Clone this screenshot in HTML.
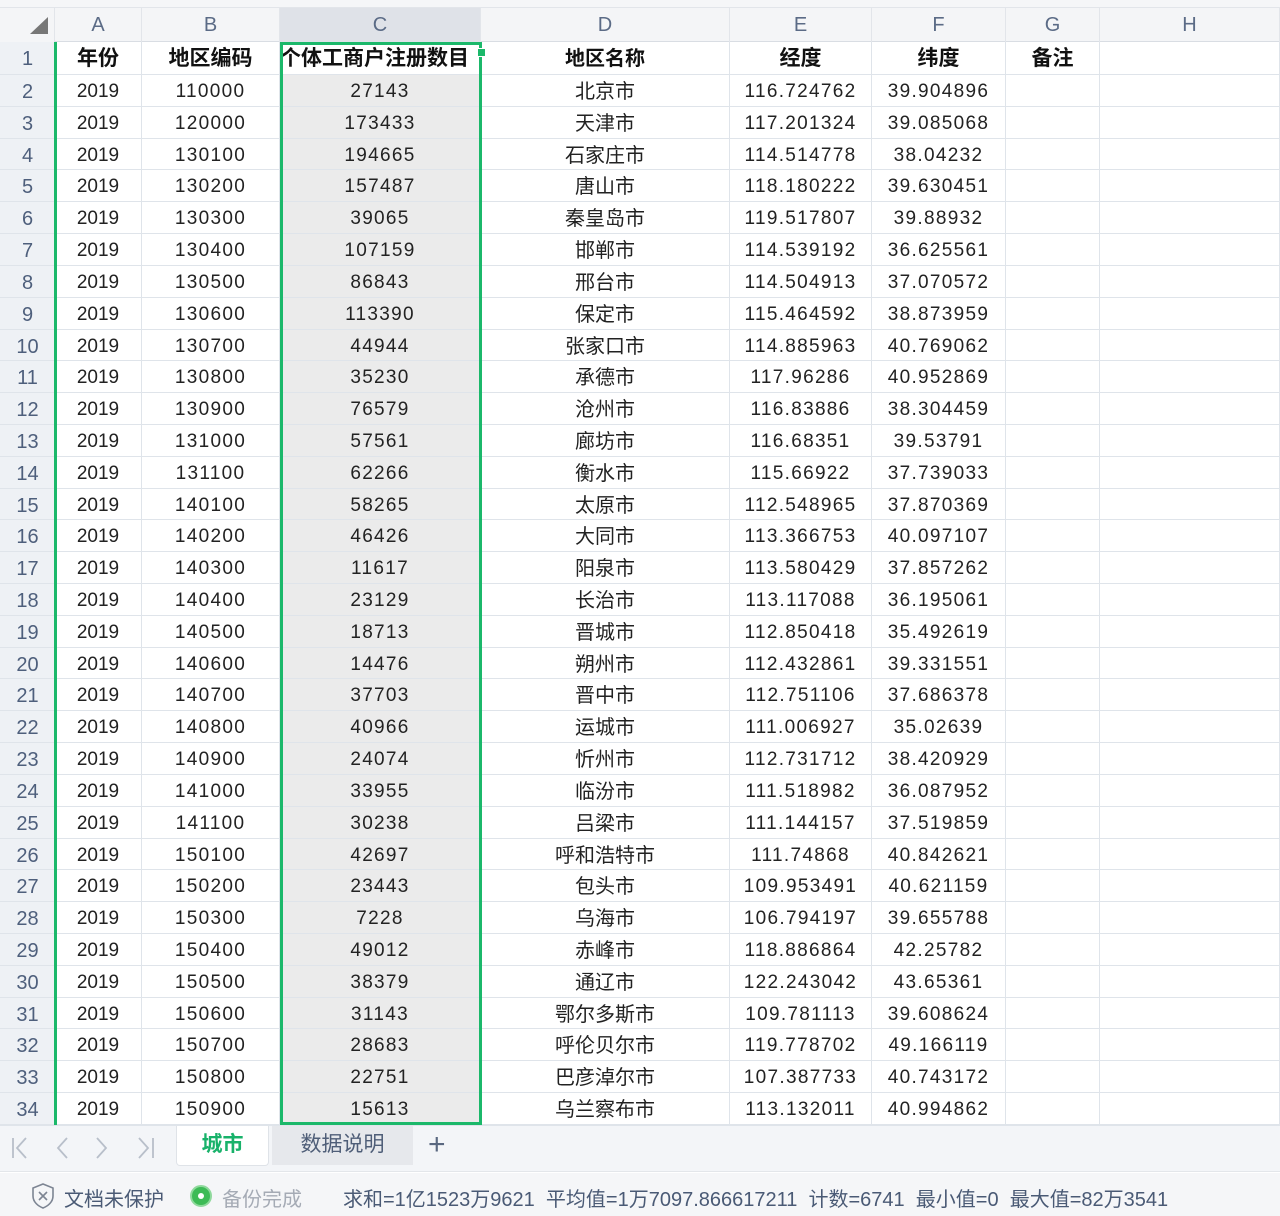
<!DOCTYPE html>
<html><head><meta charset="utf-8"><style>
*{margin:0;padding:0;box-sizing:border-box}
body{width:1280px;height:1216px;overflow:hidden;background:#fff;font-family:"Liberation Sans","Noto Sans CJK SC",sans-serif;position:relative}
.top{position:absolute;left:0;top:0;width:1280px;height:8px;background:#f5f6f8;border-bottom:1px solid #e2e5ea}
.hdr{position:absolute;left:0;top:8px;height:34px;width:1280px;background:#f4f5f7;border-bottom:1px solid #d9dde3;display:flex}
.hdr div{height:34px;line-height:34px;text-align:center;color:#5b6b86;font-size:20px;border-right:1px solid #e2e5ea}
.grid{position:absolute;left:0;top:42px;width:1280px}
.r{display:flex;height:31.8125px;border-bottom:1px solid #dfe4ea}
.r.h{height:33px}
.r div{border-right:1px solid #dfe4ea;text-align:center;font-size:19px;color:#222;line-height:34px;white-space:nowrap;overflow:hidden}
.r.h div{font-weight:bold;font-size:21px;line-height:34px;color:#111}
.r div:first-child{background:#eef1f5;color:#4e5f7c;font-weight:normal!important;font-size:20px;border-right:none}
.r div:nth-child(4){background:#ebebeb}
.r.h div:nth-child(4){background:#fff;text-align:left;overflow:hidden}
.w4{font-size:20px!important}
.n{letter-spacing:1.3px}
.w0{width:55px}.w1{width:87px}.w2{width:138px}.w3{width:201px}.w4{width:249px}.w5{width:142px}.w6{width:134px}.w7{width:94px}.w8{width:180px}
.sel{position:absolute;left:280px;top:42px;width:202px;height:1083px;border:3px solid #1bb86a}
.lg{position:absolute;left:54px;top:42px;width:3px;height:1083px;background:#1bb86a}
.fh{position:absolute;left:477px;top:48px;width:9px;height:9px;background:#1bb86a;border:1px solid #fff}
.tabs{position:absolute;left:0;top:1125px;width:1280px;height:47px;background:#f3f5f8;border-top:1px solid #dfe4ea;border-bottom:1px solid #e3e6ea}
.status{position:absolute;left:0;top:1173px;width:1280px;height:43px;background:#f5f6f8;color:#4a5a75;font-size:20px}
</style></head><body>
<div class="top"></div>
<div class="hdr">
<div class="w0" style="position:relative;background:#f4f5f7"><svg width="22" height="20" style="position:absolute;left:28px;top:7px"><polygon points="20,2 20,19 2,19" fill="#777"/></svg></div>
<div class="w1">A</div><div class="w2">B</div><div class="w3" style="background:#dfe2e8">C</div><div class="w4">D</div><div class="w5">E</div><div class="w6">F</div><div class="w7">G</div><div class="w8">H</div>
</div>
<div class="grid">
<div class="r h"><div class="w0">1</div><div class="w1">年份</div><div class="w2">地区编码</div><div class="w3">个体工商户注册数目</div><div class="w4">地区名称</div><div class="w5">经度</div><div class="w6">纬度</div><div class="w7">备注</div><div class="w8"></div></div>
<div class="r"><div class="w0">2</div><div class="w1">2019</div><div class="w2 n">110000</div><div class="w3 n">27143</div><div class="w4">北京市</div><div class="w5 n">116.724762</div><div class="w6 n">39.904896</div><div class="w7"></div><div class="w8"></div></div>
<div class="r"><div class="w0">3</div><div class="w1">2019</div><div class="w2 n">120000</div><div class="w3 n">173433</div><div class="w4">天津市</div><div class="w5 n">117.201324</div><div class="w6 n">39.085068</div><div class="w7"></div><div class="w8"></div></div>
<div class="r"><div class="w0">4</div><div class="w1">2019</div><div class="w2 n">130100</div><div class="w3 n">194665</div><div class="w4">石家庄市</div><div class="w5 n">114.514778</div><div class="w6 n">38.04232</div><div class="w7"></div><div class="w8"></div></div>
<div class="r"><div class="w0">5</div><div class="w1">2019</div><div class="w2 n">130200</div><div class="w3 n">157487</div><div class="w4">唐山市</div><div class="w5 n">118.180222</div><div class="w6 n">39.630451</div><div class="w7"></div><div class="w8"></div></div>
<div class="r"><div class="w0">6</div><div class="w1">2019</div><div class="w2 n">130300</div><div class="w3 n">39065</div><div class="w4">秦皇岛市</div><div class="w5 n">119.517807</div><div class="w6 n">39.88932</div><div class="w7"></div><div class="w8"></div></div>
<div class="r"><div class="w0">7</div><div class="w1">2019</div><div class="w2 n">130400</div><div class="w3 n">107159</div><div class="w4">邯郸市</div><div class="w5 n">114.539192</div><div class="w6 n">36.625561</div><div class="w7"></div><div class="w8"></div></div>
<div class="r"><div class="w0">8</div><div class="w1">2019</div><div class="w2 n">130500</div><div class="w3 n">86843</div><div class="w4">邢台市</div><div class="w5 n">114.504913</div><div class="w6 n">37.070572</div><div class="w7"></div><div class="w8"></div></div>
<div class="r"><div class="w0">9</div><div class="w1">2019</div><div class="w2 n">130600</div><div class="w3 n">113390</div><div class="w4">保定市</div><div class="w5 n">115.464592</div><div class="w6 n">38.873959</div><div class="w7"></div><div class="w8"></div></div>
<div class="r"><div class="w0">10</div><div class="w1">2019</div><div class="w2 n">130700</div><div class="w3 n">44944</div><div class="w4">张家口市</div><div class="w5 n">114.885963</div><div class="w6 n">40.769062</div><div class="w7"></div><div class="w8"></div></div>
<div class="r"><div class="w0">11</div><div class="w1">2019</div><div class="w2 n">130800</div><div class="w3 n">35230</div><div class="w4">承德市</div><div class="w5 n">117.96286</div><div class="w6 n">40.952869</div><div class="w7"></div><div class="w8"></div></div>
<div class="r"><div class="w0">12</div><div class="w1">2019</div><div class="w2 n">130900</div><div class="w3 n">76579</div><div class="w4">沧州市</div><div class="w5 n">116.83886</div><div class="w6 n">38.304459</div><div class="w7"></div><div class="w8"></div></div>
<div class="r"><div class="w0">13</div><div class="w1">2019</div><div class="w2 n">131000</div><div class="w3 n">57561</div><div class="w4">廊坊市</div><div class="w5 n">116.68351</div><div class="w6 n">39.53791</div><div class="w7"></div><div class="w8"></div></div>
<div class="r"><div class="w0">14</div><div class="w1">2019</div><div class="w2 n">131100</div><div class="w3 n">62266</div><div class="w4">衡水市</div><div class="w5 n">115.66922</div><div class="w6 n">37.739033</div><div class="w7"></div><div class="w8"></div></div>
<div class="r"><div class="w0">15</div><div class="w1">2019</div><div class="w2 n">140100</div><div class="w3 n">58265</div><div class="w4">太原市</div><div class="w5 n">112.548965</div><div class="w6 n">37.870369</div><div class="w7"></div><div class="w8"></div></div>
<div class="r"><div class="w0">16</div><div class="w1">2019</div><div class="w2 n">140200</div><div class="w3 n">46426</div><div class="w4">大同市</div><div class="w5 n">113.366753</div><div class="w6 n">40.097107</div><div class="w7"></div><div class="w8"></div></div>
<div class="r"><div class="w0">17</div><div class="w1">2019</div><div class="w2 n">140300</div><div class="w3 n">11617</div><div class="w4">阳泉市</div><div class="w5 n">113.580429</div><div class="w6 n">37.857262</div><div class="w7"></div><div class="w8"></div></div>
<div class="r"><div class="w0">18</div><div class="w1">2019</div><div class="w2 n">140400</div><div class="w3 n">23129</div><div class="w4">长治市</div><div class="w5 n">113.117088</div><div class="w6 n">36.195061</div><div class="w7"></div><div class="w8"></div></div>
<div class="r"><div class="w0">19</div><div class="w1">2019</div><div class="w2 n">140500</div><div class="w3 n">18713</div><div class="w4">晋城市</div><div class="w5 n">112.850418</div><div class="w6 n">35.492619</div><div class="w7"></div><div class="w8"></div></div>
<div class="r"><div class="w0">20</div><div class="w1">2019</div><div class="w2 n">140600</div><div class="w3 n">14476</div><div class="w4">朔州市</div><div class="w5 n">112.432861</div><div class="w6 n">39.331551</div><div class="w7"></div><div class="w8"></div></div>
<div class="r"><div class="w0">21</div><div class="w1">2019</div><div class="w2 n">140700</div><div class="w3 n">37703</div><div class="w4">晋中市</div><div class="w5 n">112.751106</div><div class="w6 n">37.686378</div><div class="w7"></div><div class="w8"></div></div>
<div class="r"><div class="w0">22</div><div class="w1">2019</div><div class="w2 n">140800</div><div class="w3 n">40966</div><div class="w4">运城市</div><div class="w5 n">111.006927</div><div class="w6 n">35.02639</div><div class="w7"></div><div class="w8"></div></div>
<div class="r"><div class="w0">23</div><div class="w1">2019</div><div class="w2 n">140900</div><div class="w3 n">24074</div><div class="w4">忻州市</div><div class="w5 n">112.731712</div><div class="w6 n">38.420929</div><div class="w7"></div><div class="w8"></div></div>
<div class="r"><div class="w0">24</div><div class="w1">2019</div><div class="w2 n">141000</div><div class="w3 n">33955</div><div class="w4">临汾市</div><div class="w5 n">111.518982</div><div class="w6 n">36.087952</div><div class="w7"></div><div class="w8"></div></div>
<div class="r"><div class="w0">25</div><div class="w1">2019</div><div class="w2 n">141100</div><div class="w3 n">30238</div><div class="w4">吕梁市</div><div class="w5 n">111.144157</div><div class="w6 n">37.519859</div><div class="w7"></div><div class="w8"></div></div>
<div class="r"><div class="w0">26</div><div class="w1">2019</div><div class="w2 n">150100</div><div class="w3 n">42697</div><div class="w4">呼和浩特市</div><div class="w5 n">111.74868</div><div class="w6 n">40.842621</div><div class="w7"></div><div class="w8"></div></div>
<div class="r"><div class="w0">27</div><div class="w1">2019</div><div class="w2 n">150200</div><div class="w3 n">23443</div><div class="w4">包头市</div><div class="w5 n">109.953491</div><div class="w6 n">40.621159</div><div class="w7"></div><div class="w8"></div></div>
<div class="r"><div class="w0">28</div><div class="w1">2019</div><div class="w2 n">150300</div><div class="w3 n">7228</div><div class="w4">乌海市</div><div class="w5 n">106.794197</div><div class="w6 n">39.655788</div><div class="w7"></div><div class="w8"></div></div>
<div class="r"><div class="w0">29</div><div class="w1">2019</div><div class="w2 n">150400</div><div class="w3 n">49012</div><div class="w4">赤峰市</div><div class="w5 n">118.886864</div><div class="w6 n">42.25782</div><div class="w7"></div><div class="w8"></div></div>
<div class="r"><div class="w0">30</div><div class="w1">2019</div><div class="w2 n">150500</div><div class="w3 n">38379</div><div class="w4">通辽市</div><div class="w5 n">122.243042</div><div class="w6 n">43.65361</div><div class="w7"></div><div class="w8"></div></div>
<div class="r"><div class="w0">31</div><div class="w1">2019</div><div class="w2 n">150600</div><div class="w3 n">31143</div><div class="w4">鄂尔多斯市</div><div class="w5 n">109.781113</div><div class="w6 n">39.608624</div><div class="w7"></div><div class="w8"></div></div>
<div class="r"><div class="w0">32</div><div class="w1">2019</div><div class="w2 n">150700</div><div class="w3 n">28683</div><div class="w4">呼伦贝尔市</div><div class="w5 n">119.778702</div><div class="w6 n">49.166119</div><div class="w7"></div><div class="w8"></div></div>
<div class="r"><div class="w0">33</div><div class="w1">2019</div><div class="w2 n">150800</div><div class="w3 n">22751</div><div class="w4">巴彦淖尔市</div><div class="w5 n">107.387733</div><div class="w6 n">40.743172</div><div class="w7"></div><div class="w8"></div></div>
<div class="r"><div class="w0">34</div><div class="w1">2019</div><div class="w2 n">150900</div><div class="w3 n">15613</div><div class="w4">乌兰察布市</div><div class="w5 n">113.132011</div><div class="w6 n">40.994862</div><div class="w7"></div><div class="w8"></div></div>
</div>
<div class="lg"></div>
<div class="sel"></div>
<div class="fh"></div>
<div class="tabs">
<svg width="160" height="40" style="position:absolute;left:0;top:2px" fill="none" stroke="#b8bfca" stroke-width="1.8">
<path d="M13 10v20M26 10l-9 10 9 10"/><path d="M67 10l-9 10 9 10"/><path d="M97 10l9 10-9 10"/><path d="M139 10l9 10-9 10M153 10v20"/></svg>
<div style="position:absolute;left:176px;top:0;width:93px;height:40px;background:#fff;border:1px solid #dfe3e8;border-top:none;border-radius:0 0 4px 4px;color:#18b26a;font-size:21px;font-weight:bold;text-align:center;line-height:38px">城市</div>
<div style="position:absolute;left:272px;top:0;width:141px;height:39px;background:#e6e8ec;color:#4f5e78;font-size:21px;text-align:center;line-height:38px">数据说明</div>
<div style="position:absolute;left:428px;top:0;font-size:30px;color:#5a6880;line-height:38px;font-weight:300">+</div>
</div>
<div class="status">
<svg width="26" height="28" style="position:absolute;left:31px;top:9px" fill="none" stroke="#7d8593" stroke-width="1.6"><path d="M12 2L22 6v8c0 6-5 10-10 12C7 24 2 20 2 14V6z"/><path d="M8 10l8 8M16 10l-8 8"/></svg>
<div style="position:absolute;left:64px;top:10px">文档未保护</div>
<div style="position:absolute;left:190px;top:12px;width:22px;height:22px;border-radius:50%;background:#3dbb56;border:2px solid #8fd99c"><div style="position:absolute;left:6px;top:6px;width:6px;height:6px;border-radius:50%;background:#fff"></div></div>
<div style="position:absolute;left:222px;top:10px;color:#a5abb5">备份完成</div>
<div style="position:absolute;left:343px;top:10px;white-space:nowrap">求和=1亿1523万9621&nbsp;&nbsp;平均值=1万7097.866617211&nbsp;&nbsp;计数=6741&nbsp;&nbsp;最小值=0&nbsp;&nbsp;最大值=82万3541</div>
</div>
</body></html>
